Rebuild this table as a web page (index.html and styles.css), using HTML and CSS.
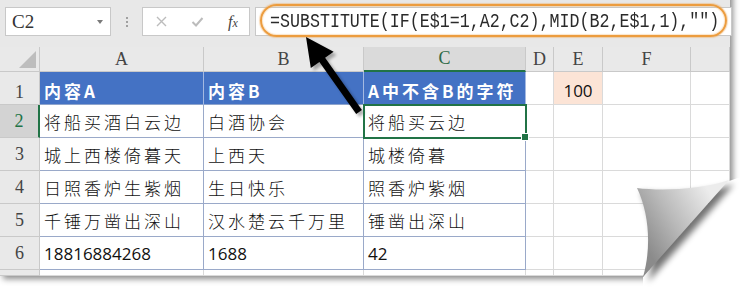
FILE: index.html
```html
<!DOCTYPE html>
<html lang="zh-CN">
<head>
    <meta charset="UTF-8">
    <title>SUBSTITUTE 去除相同字符</title>
    <link rel="stylesheet" href="styles.css">
</head>
<body>

<div class="page">
    <div class="sheet">
        <!-- 编辑栏 -->
        <div class="formula-bar">
            <div class="name-box">C2<i class="caret"></i></div>
            <div class="grip"><i></i><i></i><i></i></div>
            <div class="fx-box">
                <svg class="btn-cancel" width="13" height="13" viewBox="0 0 13 13">
                    <path d="M2 2 L11 11 M11 2 L2 11" stroke="#bcbcbc" stroke-width="1.4" fill="none"/>
                </svg>
                <svg class="btn-enter" width="13" height="12" viewBox="0 0 13 12">
                    <path d="M1.5 6 L5 9.5 L11.5 2" stroke="#bcbcbc" stroke-width="2" fill="none"/>
                </svg>
                <span class="fx">f<small>x</small></span>
            </div>
            <div class="formula-box">
                <span class="formula">=SUBSTITUTE(IF(E$1=1,A2,C2),MID(B2,E$1,1),"")</span>
            </div>
            <div class="callout"></div>
        </div>

        <!-- 工作表 -->
        <div class="grid">
            <div class="hd corner"><i></i></div>
            <div class="hd">A</div>
            <div class="hd">B</div>
            <div class="hd on">C</div>
            <div class="hd">D</div>
            <div class="hd">E</div>
            <div class="hd">F</div>
            <div class="hd"></div>

            <div class="rh r1">1</div>
            <div class="c th">内容A</div>
            <div class="c th">内容B</div>
            <div class="c th">A中不含B的字符</div>
            <div class="c"></div>
            <div class="c num param">100</div>
            <div class="c"></div>
            <div class="c"></div>

            <div class="rh on">2</div>
            <div class="c t">将船买酒白云边</div>
            <div class="c t">白酒协会</div>
            <div class="c t sel">将船买云边</div>
            <div class="c"></div>
            <div class="c"></div>
            <div class="c"></div>
            <div class="c"></div>

            <div class="rh">3</div>
            <div class="c t">城上西楼倚暮天</div>
            <div class="c t">上西天</div>
            <div class="c t">城楼倚暮</div>
            <div class="c"></div>
            <div class="c"></div>
            <div class="c"></div>
            <div class="c"></div>

            <div class="rh">4</div>
            <div class="c t">日照香炉生紫烟</div>
            <div class="c t">生日快乐</div>
            <div class="c t">照香炉紫烟</div>
            <div class="c"></div>
            <div class="c"></div>
            <div class="c"></div>
            <div class="c"></div>

            <div class="rh">5</div>
            <div class="c t">千锤万凿出深山</div>
            <div class="c t">汉水楚云千万里</div>
            <div class="c t">锤凿出深山</div>
            <div class="c"></div>
            <div class="c"></div>
            <div class="c"></div>
            <div class="c"></div>

            <div class="rh">6</div>
            <div class="c t num">18816884268</div>
            <div class="c t num">1688</div>
            <div class="c t num">42</div>
            <div class="c"></div>
            <div class="c"></div>
            <div class="c"></div>
            <div class="c"></div>

            <div class="rh"></div>
            <div class="c"></div>
            <div class="c"></div>
            <div class="c"></div>
            <div class="c"></div>
            <div class="c"></div>
            <div class="c"></div>
            <div class="c"></div>
        </div>
    </div>

    <!-- 指向公式的箭头 + 右下角卷页 -->
    <svg class="overlay" width="744" height="290" viewBox="0 0 744 290">
        <defs>
            <linearGradient id="flap" x1="641" y1="240" x2="712" y2="196" gradientUnits="userSpaceOnUse">
                <stop offset="0" stop-color="#8b8b8b"/>
                <stop offset="0.45" stop-color="#b9b9b9"/>
                <stop offset="1" stop-color="#ececec"/>
            </linearGradient>
            <filter id="soft" x="-20%" y="-20%" width="140%" height="140%">
                <feGaussianBlur stdDeviation="3"/>
            </filter>
            <filter id="softer" x="-20%" y="-20%" width="140%" height="140%">
                <feGaussianBlur stdDeviation="1.5"/>
            </filter>
        </defs>

        <polygon points="309,40 336.6,54.7 328.1,60.8 364.9,113 359.2,117 322.4,64.9 313.8,70.9"
                 fill="#000" opacity="0.3" filter="url(#softer)"/>
        <polygon points="306,37 333.6,51.7 325.1,57.8 361.9,110 356.2,114 319.4,61.9 310.8,67.9"
                 fill="#000"/>

        <polygon points="643,277 729,181 744,176 744,290 643,290" fill="#fff"/>
        <path d="M641,192 C664,195 704,194 734,184 L648,282 C656,255 655,220 641,192 Z"
              fill="#000" opacity="0.55" filter="url(#soft)"/>
        <path d="M637,188 C660,191 700,190 729,180 L643,277 C651,250 650,215 637,188 Z"
              fill="url(#flap)"/>
    </svg>
</div>

</body>
</html>
```

FILE: styles.css
```css
* {
    box-sizing: border-box;
}
body {
    margin: 0;
    background: #fff;
}
.page {
    position: relative;
    width: 744px;
    height: 290px;
    overflow: hidden;
}
.sheet {
    width: 730px;
    margin-top: -10px;
    background: #fff;
    box-shadow: 3px 3px 6px rgba(0, 0, 0, 0.45);
}

/* 编辑栏 */
.formula-bar {
    position: relative;
    display: flex;
    align-items: flex-start;
    height: 57px;
    padding-top: 17px;
    background: #e8e8e8;
}
.name-box {
    display: flex;
    align-items: center;
    margin-left: 5px;
    width: 106px;
    height: 29px;
    padding-left: 6px;
    background: #fff;
    border: 1px solid #c8c8c8;
    font: 19px "Liberation Serif", serif;
    color: #333;
}
.caret {
    margin-left: auto;
    margin-right: 7px;
    border-left: 3px solid transparent;
    border-right: 3px solid transparent;
    border-top: 4px solid #7a7a7a;
}
.grip {
    display: flex;
    flex-direction: column;
    align-items: center;
    justify-content: center;
    gap: 2px;
    width: 31px;
    height: 29px;
}
.grip i {
    width: 2px;
    height: 2px;
    background: #a0a0a0;
}
.fx-box {
    display: flex;
    align-items: center;
    width: 108px;
    height: 29px;
    padding-left: 12px;
    background: #fff;
    border: 1px solid #c8c8c8;
}
.btn-enter {
    margin-left: 23px;
}
.fx {
    margin-left: 24px;
    font: italic 16px "Liberation Serif", serif;
    color: #444;
}
.fx small {
    font-size: 12px;
}
.formula-box {
    flex: 1;
    display: flex;
    align-items: center;
    height: 29px;
    margin-left: 5px;
    margin-right: -2px;
    padding-left: 14px;
    background: #fff;
    border: 1px solid #c8c8c8;
    overflow: hidden;
}
.formula {
    display: inline-block;
    font: 20.8px "Liberation Mono", monospace;
    color: #2a2a2a;
    white-space: nowrap;
    transform: scaleX(0.8);
    transform-origin: left center;
}
.callout {
    position: absolute;
    left: 260px;
    top: 14px;
    width: 467px;
    height: 33px;
    border: 2px solid #ec9c3e;
    border-radius: 17px;
    box-shadow: 0 0 1px 1px rgba(240, 170, 90, 0.45), inset 0 0 1px 1px rgba(245, 190, 120, 0.4);
}

/* 单元格 */
.grid {
    display: grid;
    grid-template-columns: 40px 164px 160px 162px 28px 49px 88px 39px;
    grid-template-rows: 25px repeat(6, 33px) 6px;
}
.grid > div {
    display: flex;
    align-items: center;
    overflow: hidden;
    white-space: nowrap;
    border-right: 1px solid #dadada;
    border-bottom: 1px solid #dadada;
}
.hd,
.rh {
    justify-content: center;
    background: #e9e9e9;
    font: 18px "Liberation Serif", serif;
    color: #444;
}
.grid > .hd,
.grid > .rh {
    border-color: #c9c9c9;
}
.grid > .hd.on {
    background: #dadada;
    color: #2d6a48;
    border-bottom: 2px solid #217346;
}
.grid > .rh.on {
    background: #d3d3d3;
    color: #217346;
    border-right: 2px solid #217346;
}
.rh.r1 {
    padding-top: 9px;
}
.corner {
    position: relative;
}
.corner i {
    position: absolute;
    right: 3px;
    bottom: 3px;
    border-left: 17px solid transparent;
    border-bottom: 17px solid #bdbdbd;
}
.c {
    padding-left: 4px;
    font: 300 17px "Noto Sans CJK SC", sans-serif;
    letter-spacing: 3px;
    color: #111;
}
.grid > .t {
    border-color: #9aa9c9;
}
.grid > .th {
    padding-top: 5px;
    background: #4472c4;
    color: #fff;
    font-weight: 700;
    border-right-color: #a4b9e1;
    border-bottom-color: #8ea4cc;
}
.num {
    font: 17px "Open Sans", sans-serif;
    letter-spacing: 0;
}
.grid > .param {
    justify-content: center;
    padding: 5px 0 0;
    background: #fce4d6;
}
.grid > .sel {
    position: relative;
    z-index: 1;
    overflow: visible;
    outline: 2px solid #217346;
    outline-offset: -1px;
}
.sel::after {
    content: "";
    position: absolute;
    right: -4px;
    bottom: -4px;
    width: 6px;
    height: 6px;
    background: #217346;
    border: 1px solid #fff;
}

.overlay {
    position: absolute;
    left: 0;
    top: 0;
    pointer-events: none;
}
```
